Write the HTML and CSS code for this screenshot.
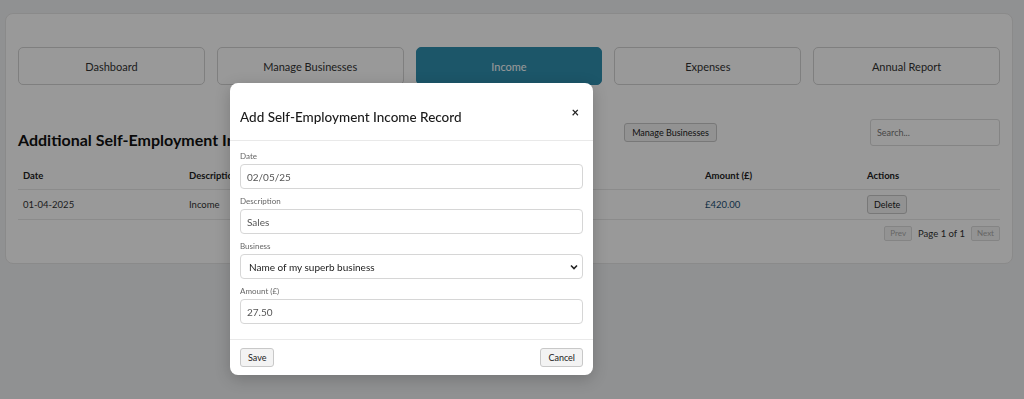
FILE: index.html
```html
<!DOCTYPE html>
<html lang="en">
<head>
<meta charset="utf-8">
<title>Income</title>
<link rel="stylesheet" href="styles.css">
</head>
<body>
<div class="page">
  <div class="card">
    <nav class="nav">
      <button class="nav-btn">Dashboard</button>
      <button class="nav-btn">Manage Businesses</button>
      <button class="nav-btn active">Income</button>
      <button class="nav-btn">Expenses</button>
      <button class="nav-btn">Annual Report</button>
    </nav>
    <div class="toolbar">
      <h2 class="heading">Additional Self-Employment Income Records</h2>
      <button class="small-btn manage">Manage Businesses</button>
      <input class="search" type="text" placeholder="Search...">
    </div>
    <table class="table">
      <colgroup>
        <col class="c-date"><col class="c-desc"><col class="c-bus"><col class="c-amt"><col class="c-act">
      </colgroup>
      <thead>
        <tr><th>Date</th><th>Description</th><th>Business</th><th>Amount (£)</th><th>Actions</th></tr>
      </thead>
      <tbody>
        <tr><td>01-04-2025</td><td>Income</td><td>Name of my superb business</td><td class="amt">£420.00</td><td><button class="small-btn">Delete</button></td></tr>
      </tbody>
    </table>
    <div class="pager">
      <button class="pg-btn" disabled>Prev</button>
      <span class="pg-text">Page 1 of 1</span>
      <button class="pg-btn" disabled>Next</button>
    </div>
  </div>
</div>

<div class="overlay"></div>
<div class="modal">
  <div class="modal-head">
    <h3 class="modal-title">Add Self-Employment Income Record</h3>
    <button class="close">×</button>
  </div>
  <div class="modal-body">
    <div class="field">
      <label class="label">Date</label>
      <input class="input" type="text" value="02/05/25">
    </div>
    <div class="field">
      <label class="label">Description</label>
      <input class="input" type="text" value="Sales">
    </div>
    <div class="field">
      <label class="label">Business</label>
      <div class="select">
        <span>Name of my superb business</span>
        <svg width="8" height="6" viewBox="0 0 8 6"><path d="M1 1.5 L4 4.5 L7 1.5" fill="none" stroke="#222" stroke-width="1.6"/></svg>
      </div>
    </div>
    <div class="field">
      <label class="label">Amount (£)</label>
      <input class="input" type="text" value="27.50">
    </div>
  </div>
  <div class="modal-foot">
    <button class="small-btn">Save</button>
    <button class="small-btn">Cancel</button>
  </div>
</div>
</body>
</html>
```
FILE: styles.css
```css
* { box-sizing: border-box; }
html, body { margin: 0; }
body {
  background: #f1f2f4;
  font-family: Lato, "Open Sans", sans-serif;
  color: #212529;
  width: 1024px;
  height: 399px;
  overflow: hidden;
}
button, input { font-family: inherit; }
.page { padding: 13px 11px 0 5px; }
.card {
  background: #fff;
  border: 1px solid #e6e6e6;
  border-radius: 8px;
  padding: 33px 12px 22px;
  height: 251px;
}
.nav { display: flex; gap: 12px; }
.nav-btn {
  flex: 1;
  height: 38px;
  background: #fff;
  border: 1px solid #d4d4d4;
  border-radius: 5px;
  font-size: 11px;
  color: #333;
}
.nav-btn.active { background: #2f8fb0; border-color: #2f8fb0; color: #fff; }
.toolbar {
  display: flex;
  align-items: center;
  margin-top: 34px;
  height: 27px;
}
.heading { flex: 1; margin: 13px 0 0; font-size: 16px; font-weight: 700; color: #111; white-space: nowrap; }
.manage { margin-right: 153px; padding: 0 5px; }
.small-btn {
  background: #f3f3f3;
  border: 1px solid #c8c8c8;
  border-radius: 3px;
  font-size: 9px;
  color: #222;
  padding: 0 7px;
  height: 19px;
}
.search {
  width: 130px;
  height: 27px;
  border: 1px solid #ddd;
  border-radius: 3px;
  padding: 0 6px;
  font-size: 9px;
}
.search::placeholder { color: #777; }
.table { width: 100%; border-collapse: collapse; table-layout: fixed; margin-top: 17px; font-size: 9.5px; }
.c-date { width: 166px; } .c-desc { width: 166px; } .c-bus { width: 350px; } .c-amt { width: 162px; } .c-act { width: 138px; }
.table th { text-align: left; font-weight: 700; padding: 0 5px; height: 26px; border-bottom: 1px solid #e8e8e8; color: #222; }
.table td { padding: 0 5px; height: 30px; border-bottom: 1px solid #e8e8e8; color: #333; }
.table td.amt { color: #1d4f73; }
.table td .small-btn { padding: 0 6px; }
.pager { display: flex; justify-content: flex-end; align-items: center; gap: 6px; margin-top: 6px; }
.pg-btn { height: 15px; font-size: 8px; background: #f5f5f5; border: 1px solid #ddd; color: #aaa; padding: 0 5px; border-radius: 2px; }
.pg-text { font-size: 9.5px; font-weight: 400; color: #333; }
.overlay { position: fixed; inset: 0; background: rgba(0, 0, 0, 0.4); }
.modal {
  position: absolute;
  left: 230px;
  top: 83px;
  width: 363px;
  background: #fff;
  border-radius: 8px;
  box-shadow: 0 4px 16px rgba(0,0,0,0.2);
}
.modal-head {
  display: flex;
  justify-content: space-between;
  align-items: flex-start;
  padding: 24px 14px 13px 10px;
  border-bottom: 1px solid #e9e9e9;
}
.modal-title { margin: 0; font-size: 13.5px; font-weight: 500; line-height: 20px; color: #1a1a1a; }
.close { background: none; border: 0; padding: 0; font-size: 13px; font-weight: 700; line-height: 12px; margin-top: -1px; color: #222; }
.modal-body { padding: 9px 10px 15px; }
.field { display: flex; flex-direction: column; margin-bottom: 6px; }
.field:last-child { margin-bottom: 0; }
.label { font-size: 8px; color: #666; line-height: 12px; margin-bottom: 2px; }
.input, .select {
  height: 25px;
  border: 1px solid #d6d6d6;
  border-radius: 4px;
  padding: 0 6px;
  font-size: 10px;
  color: #555;
  width: 100%;
}
.select { display: flex; align-items: center; justify-content: space-between; color: #222; padding: 0 4px 0 8px; }
.modal-foot {
  display: flex;
  justify-content: space-between;
  padding: 8px 10px 8px;
  border-top: 1px solid #e9e9e9;
}
```
